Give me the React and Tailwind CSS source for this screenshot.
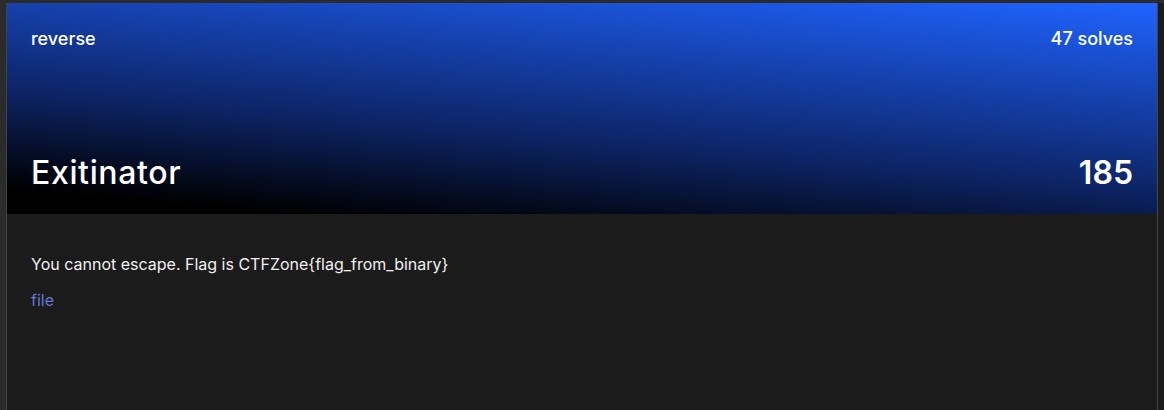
export default function App() {
  return (
    <div
      className="flex h-[410px] w-[1164px] flex-col bg-[#2a2a2a] pt-[3px] text-white"
      style={{ fontFamily: 'Inter, "Noto Sans", sans-serif' }}
    >
      <div className="flex flex-1">
        <div className="w-[6px] bg-[#2b2b2b]" />
        <div className="flex w-[1152px] flex-col border-x border-[#444] bg-[#1b1b1b]">
          {/* header */}
          <div className="flex h-[211px] flex-col justify-between bg-[linear-gradient(5deg,#000_8%,#0d2466_40%,#1f63ff_100%)] px-6 pb-[23px] pt-[24px]">
            <div className="flex items-center justify-between text-[18px] leading-6 font-medium">
              <span>reverse</span>
              <span>47 solves</span>
            </div>
            <div className="flex items-center justify-between text-[32px] leading-9 font-medium">
              <span className="tracking-[0.02em]">Exitinator</span>
              <span className="font-semibold">185</span>
            </div>
          </div>
          {/* body */}
          <div className="flex flex-col gap-3 px-6 pt-[38px] text-[16px] leading-6">
            <p className="text-[#f0f0f0]">You cannot escape. Flag is CTFZone{'{'}flag_from_binary{'}'}</p>
            <a href="#" className="w-fit text-[#6078d8]">file</a>
          </div>
        </div>
        <div className="flex-1 bg-[#1b1b1b]" />
      </div>
    </div>
  );
}
